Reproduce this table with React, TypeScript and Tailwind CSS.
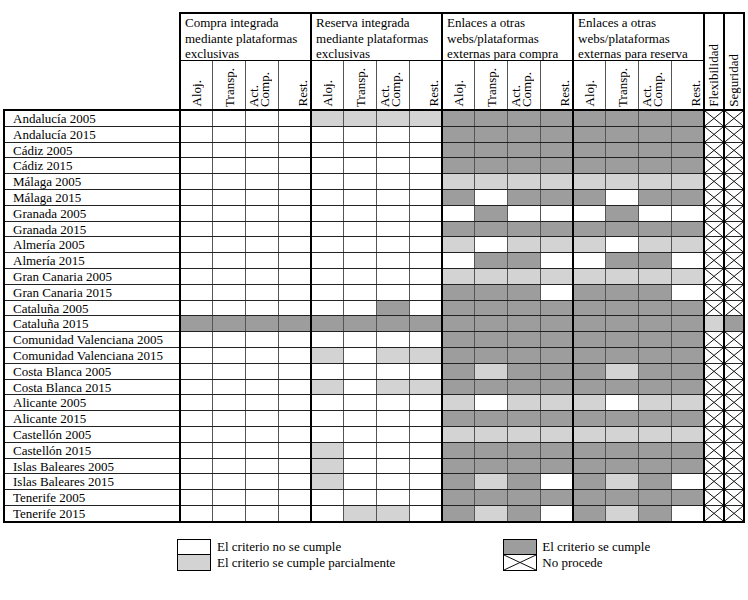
import React from "react";

type Cell = "W" | "L" | "D" | "X";

const rows: { name: string; cells: string; flex: Cell; seg: Cell }[] = [
  { name: "Andalucía 2005", cells: "WWWWLLLLDDDDDDDD", flex: "X", seg: "X" },
  { name: "Andalucía 2015", cells: "WWWWWWWWDDDDDDDD", flex: "X", seg: "X" },
  { name: "Cádiz 2005", cells: "WWWWWWWWDDDDDDDD", flex: "X", seg: "X" },
  { name: "Cádiz 2015", cells: "WWWWWWWWDDDDDDDD", flex: "X", seg: "X" },
  { name: "Málaga 2005", cells: "WWWWWWWWLLLLLLLL", flex: "X", seg: "X" },
  { name: "Málaga 2015", cells: "WWWWWWWWDWDDDWDD", flex: "X", seg: "X" },
  { name: "Granada 2005", cells: "WWWWWWWWWDWWWDWW", flex: "X", seg: "X" },
  { name: "Granada 2015", cells: "WWWWWWWWDDDDDDDD", flex: "X", seg: "X" },
  { name: "Almería 2005", cells: "WWWWWWWWLWLLLWLL", flex: "X", seg: "X" },
  { name: "Almería 2015", cells: "WWWWWWWWWDDWWDDW", flex: "X", seg: "X" },
  { name: "Gran Canaria 2005", cells: "WWWWWWWWLLLLLLLL", flex: "X", seg: "X" },
  { name: "Gran Canaria 2015", cells: "WWWWWWWWDDDWDDDW", flex: "X", seg: "X" },
  { name: "Cataluña 2005", cells: "WWWWWWDWDDDDDDDD", flex: "X", seg: "X" },
  { name: "Cataluña 2015", cells: "DDDDDDDDDDDDDDDD", flex: "L", seg: "D" },
  { name: "Comunidad Valenciana 2005", cells: "WWWWWWWWDDDDDDDD", flex: "X", seg: "X" },
  { name: "Comunidad Valenciana 2015", cells: "WWWWLWLLDDDDDDDD", flex: "X", seg: "X" },
  { name: "Costa Blanca 2005", cells: "WWWWWWWWDLDDDLDD", flex: "X", seg: "X" },
  { name: "Costa Blanca 2015", cells: "WWWWLWLLDDDDDDDD", flex: "X", seg: "X" },
  { name: "Alicante 2005", cells: "WWWWWWWWLWLLLWLL", flex: "X", seg: "X" },
  { name: "Alicante 2015", cells: "WWWWWWWWDDDDDDDD", flex: "X", seg: "X" },
  { name: "Castellón 2005", cells: "WWWWWWWWLLLLLLLL", flex: "X", seg: "X" },
  { name: "Castellón 2015", cells: "WWWWLWWWDDDDDDDD", flex: "X", seg: "X" },
  { name: "Islas Baleares 2005", cells: "WWWWLWWWDDDDDDDD", flex: "X", seg: "X" },
  { name: "Islas Baleares 2015", cells: "WWWWLWWWDLDWDLDW", flex: "X", seg: "X" },
  { name: "Tenerife 2005", cells: "WWWWWWWWDDDDDDDD", flex: "X", seg: "X" },
  { name: "Tenerife 2015", cells: "WWWWWLLWDLDWDLDW", flex: "X", seg: "X" },
];

const groups = [
  ["Compra integrada", "mediante plataformas", "exclusivas"],
  ["Reserva integrada", "mediante plataformas", "exclusivas"],
  ["Enlaces a otras", "webs/plataformas", "externas para compra"],
  ["Enlaces a otras", "webs/plataformas", "externas para reserva"],
];

const subs = [
  { lines: ["Aloj."], align: "items-center" },
  { lines: ["Transp."], align: "items-center" },
  { lines: ["Act.", "Comp."], align: "items-start" },
  { lines: ["Rest."], align: "items-end" },
];

const Cross = ({ h = "h-[14.8px]" }: { h?: string }) => (
  <svg className={`block w-full ${h}`} viewBox="0 0 20 15" preserveAspectRatio="none">
    <line x1="0" y1="0" x2="20" y2="15" stroke="#111" strokeWidth="1" vectorEffect="non-scaling-stroke" />
    <line x1="0" y1="15" x2="20" y2="0" stroke="#111" strokeWidth="1" vectorEffect="non-scaling-stroke" />
  </svg>
);

const fill = (c: Cell) =>
  c === "D" ? "bg-[#9d9d9d]" : c === "L" ? "bg-[#d3d3d3]" : "bg-white";

// left edge of each data column: group starts get the heavy rule
const colBorder = (i: number) =>
  i % 4 === 0 ? "border-l-2 border-l-black" : "border-l border-l-[#555]";

export default function App() {
  return (
    <div className="min-h-[600px] w-[748px] bg-white pl-[3px] pt-[12px] text-black font-['Liberation_Serif',serif] text-[13px]">
      <table className="border-collapse table-fixed w-[740px]">
        <colgroup>
          <col className="w-[176px]" />
          {Array.from({ length: 16 }).map((_, i) => (
            <col key={i} className="w-[32.75px]" />
          ))}
          <col className="w-[20px]" />
          <col className="w-[20px]" />
        </colgroup>
        <thead>
          <tr>
            <th rowSpan={2} className="p-0 border-b-2 border-b-black" />
            {groups.map((g, i) => (
              <th
                key={i}
                colSpan={4}
                className="p-0 border-2 border-black border-b border-b-black text-left font-normal align-top"
              >
                <div className="h-[46px] pl-[4px] pt-[1px] leading-[15.5px] whitespace-nowrap">
                  {g.map((l) => (
                    <div key={l}>{l}</div>
                  ))}
                </div>
              </th>
            ))}
            {["Flexibilidad", "Seguridad"].map((t) => (
              <th
                key={t}
                rowSpan={2}
                className="p-0 border-2 border-black font-normal align-bottom"
              >
                <div className="h-[95px] flex items-end justify-center pb-[2px]">
                  <span className="[writing-mode:vertical-rl] rotate-180 leading-[16px] whitespace-nowrap">
                    {t}
                  </span>
                </div>
              </th>
            ))}
          </tr>
          <tr>
            {Array.from({ length: 16 }).map((_, i) => {
              const s = subs[i % 4];
              return (
                <th
                  key={i}
                  className={`p-0 font-normal border-t border-t-black border-b-2 border-b-black ${colBorder(i)} ${
                    i === 15 ? "border-r-2 border-r-black" : ""
                  }`}
                >
                  <div className={`h-[47px] flex flex-col justify-end px-[2px] pb-[2px] ${s.align}`}>
                    <span className="[writing-mode:vertical-rl] rotate-180 leading-[11px] whitespace-nowrap text-left">
                      {s.lines.map((l, k) => (
                        <React.Fragment key={l}>
                          {k > 0 && <br />}
                          {l}
                        </React.Fragment>
                      ))}
                    </span>
                  </div>
                </th>
              );
            })}
          </tr>
        </thead>
        <tbody>
          {rows.map((r, ri) => (
            <tr key={r.name}>
              <td
                className={`p-0 border-l-2 border-l-black border-r-2 border-r-black ${
                  ri === rows.length - 1 ? "border-b-2 border-b-black" : "border-b border-b-[#222]"
                }`}
              >
                <div className="h-[14.8px] pl-[8px] leading-[15px] whitespace-nowrap">{r.name}</div>
              </td>
              {r.cells.split("").map((c, ci) => (
                <td
                  key={ci}
                  className={`p-0 ${fill(c as Cell)} ${colBorder(ci)} ${
                    ri === rows.length - 1 ? "border-b-2 border-b-black" : "border-b border-b-[#222]"
                  }`}
                >
                  <div className="h-[14.8px]" />
                </td>
              ))}
              {[r.flex, r.seg].map((c, k) => (
                <td
                  key={k}
                  className={`p-0 border-l-2 border-l-black border-r-2 border-r-black ${fill(c)} ${
                    ri === rows.length - 1 ? "border-b-2 border-b-black" : "border-b border-b-[#222]"
                  }`}
                >
                  {c === "X" ? <Cross /> : <div className="h-[14.8px]" />}
                </td>
              ))}
            </tr>
          ))}
        </tbody>
      </table>

      <div className="mt-[16px] flex">
        <div className="ml-[174px] flex flex-col">
          <div className="flex items-center">
            <div className="w-[34px] h-[16px] border border-black bg-white" />
            <span className="ml-[6px] leading-[15px]">El criterio no se cumple</span>
          </div>
          <div className="flex items-center">
            <div className="w-[34px] h-[16px] border border-t-0 border-black bg-[#d3d3d3]" />
            <span className="ml-[6px] leading-[15px]">El criterio se cumple parcialmente</span>
          </div>
        </div>
        <div className="ml-[108px] flex flex-col">
          <div className="flex items-center">
            <div className="w-[34px] h-[16px] border border-black bg-[#9d9d9d]" />
            <span className="ml-[5px] leading-[15px]">El criterio se cumple</span>
          </div>
          <div className="flex items-center">
            <div className="w-[34px] h-[16px] border border-t-0 border-black bg-white">
              <Cross h="h-[15px]" />
            </div>
            <span className="ml-[5px] leading-[15px]">No procede</span>
          </div>
        </div>
      </div>
    </div>
  );
}
